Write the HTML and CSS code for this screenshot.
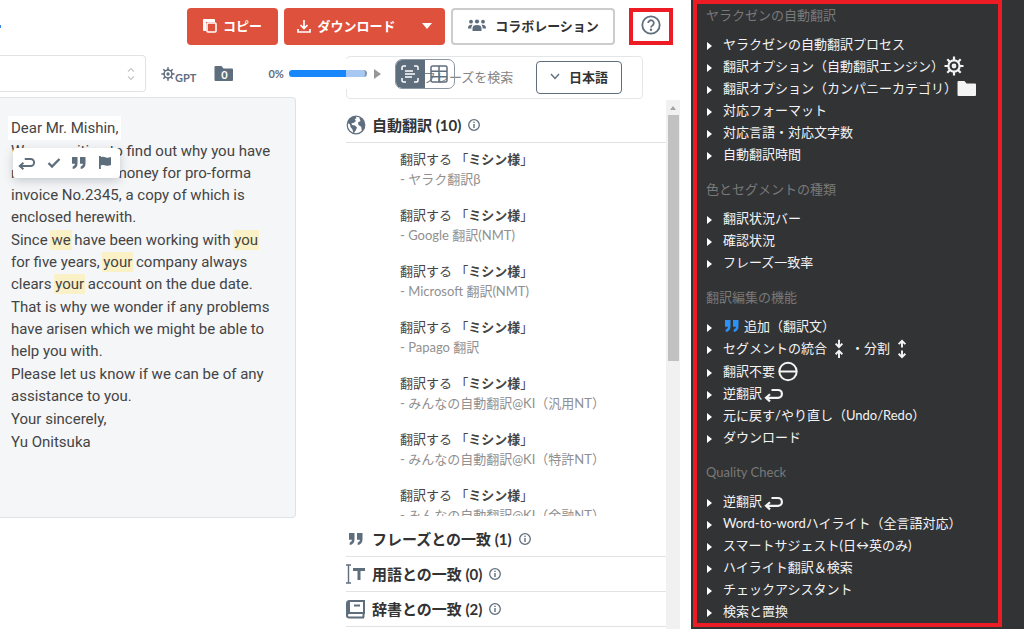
FILE: index.html
```html
<!DOCTYPE html>
<html lang="ja">
<head>
<meta charset="utf-8">
<title>翻訳エディタ</title>
<link rel="stylesheet" href="styles.css">
</head>
<body>
<svg class="sprite" aria-hidden="true">
  <symbol id="quote" viewBox="0 0 16 14"><path fill="currentColor" d="M1 1h5.500v6.500c0 3.300-1.800 5-4.800 5.500V10.500c1.500-.4 2.100-1.300 2.200-2.700H1zM9 1h5.500v6.500c0 3.300-1.800 5-4.800 5.500V10.500c1.500-.4 2.100-1.300 2.200-2.700H9z"/></symbol>
  <symbol id="return" viewBox="0 0 20 16"><path fill="none" stroke="currentColor" stroke-width="2.200" d="M7.500 3h6.500a3.900 3.900 0 0 1 0 7.800H3"/><path fill="none" stroke="currentColor" stroke-width="2.200" d="M6 7.200l-4 3.600L6 14.400"/></symbol>
  <symbol id="gear" viewBox="0 0 20 20"><g fill="none" stroke="currentColor" stroke-width="2.200"><circle cx="10" cy="10" r="5.600"/><circle cx="10" cy="10" r="1.300"/><path d="M10 .5v4M10 15.500v4M.5 10h4M15.500 10h4M3.300 3.300L6 6M14 14l2.700 2.700M16.700 3.300L14 6M6 14l-2.700 2.700"/></g></symbol>
  <symbol id="folder" viewBox="0 0 20 17"><path fill="currentColor" d="M1.500 1H7.500l2 2.500H18a1 1 0 0 1 1 1V15a1 1 0 0 1-1 1H1.500a1 1 0 0 1-1-1V2a1 1 0 0 1 1-1z"/></symbol>
  <symbol id="info" viewBox="0 0 12 12"><circle cx="6" cy="6" r="5.300" fill="none" stroke="currentColor" stroke-width="1.300"/><path fill="currentColor" d="M5.300 2.700h1.400v1.400H5.300zM5.300 5h1.400v4H5.300z"/></symbol>
</svg>
<main class="app">
  <header class="header">
    <span class="edge-mark"></span>
    <button class="btn btn-red btn-copy"><svg width="14" height="14" viewBox="0 0 14 14"><path fill="#fff" d="M1 0h10a1 1 0 0 1 1 1v2H3v9H1a1 1 0 0 1-1-1V1a1 1 0 0 1 1-1z"/><rect x="4" y="4" width="9" height="9" rx="1" fill="none" stroke="#fff" stroke-width="1.600"/></svg>コピー</button>
    <button class="btn btn-red btn-download"><svg width="14" height="14" viewBox="0 0 14 14"><path fill="none" stroke="#fff" stroke-width="1.700" d="M7 1v8M3.500 6L7 9.500 10.500 6M1 10v3h12v-3"/></svg>ダウンロード<svg class="drop" width="10" height="6" viewBox="0 0 10 6"><path fill="#fff" d="M0 0h10L5 6z"/></svg></button>
    <button class="btn btn-outline"><svg width="20" height="13" viewBox="0 0 20 13"><g fill="#5f6e7d"><circle cx="4" cy="2.700" r="1.900"/><circle cx="10" cy="2.500" r="2.100"/><circle cx="16" cy="2.700" r="1.900"/><path d="M5.500 12V9.500C5.500 7 7 6 10 6s4.500 1 4.500 3.500V12zM1 9.500C1 7 2 5.700 5.600 5.800 4.800 6.700 4.300 8 4.300 9.500zM19 9.500c0-2.500-1-3.800-4.600-3.700.8.9 1.300 2.200 1.300 3.700z"/></g></svg>コラボレーション</button>
    <button class="btn-help" aria-label="ヘルプ"><svg width="20" height="20" viewBox="0 0 20 20"><g fill="none" stroke="#5f6e7d" stroke-width="1.800"><circle cx="10" cy="10" r="8.700"/><path d="M7.200 8a2.800 2.800 0 1 1 4.600 2.200C10.700 11 10 11.400 10 12.600"/></g><circle cx="10" cy="14.800" r="1.200" fill="#5f6e7d"/></svg></button>
  </header>

  <div class="workspace">
    <section class="source">
      <div class="toolbar">
        <button class="picker" aria-label="選択"><svg width="8" height="14" viewBox="0 0 8 14"><path fill="none" stroke="#c3c8cd" stroke-width="1.200" d="M1 4.500L4 1.500l3 3M1 9.500l3 3 3-3"/></svg></button>
        <button class="gpt"><svg width="14" height="14"><use href="#gear"/></svg><span>GPT</span></button>
        <button class="folder-count"><svg width="20" height="17"><use href="#folder"/></svg><span>0</span></button>
        <div class="progress"><span>0%</span><span class="bar"><span class="bar-fill"></span></span><svg width="7" height="10" viewBox="0 0 7 10"><path fill="#979797" d="M0 0l7 5-7 5z"/></svg></div>
        <div class="view-toggle">
          <button class="on" aria-label="文書表示"><svg width="18" height="18" viewBox="0 0 18 18"><path fill="none" stroke="#fff" stroke-width="1.500" d="M1 5V2.500C1 1.600 1.600 1 2.500 1H5M13 1h2.500c.9 0 1.500.6 1.500 1.500V5M17 13v2.500c0 .9-.6 1.500-1.500 1.500H13M5 17H2.500C1.600 17 1 16.400 1 15.500V13M4 6h8M4 9h10M4 12h7"/></svg></button>
          <button aria-label="表形式"><svg width="18" height="18" viewBox="0 0 18 18"><path fill="none" stroke="#5f6e7d" stroke-width="1.500" d="M2.500 1h13c.9 0 1.500.6 1.500 1.500v13c0 .9-.6 1.500-1.500 1.500h-13C1.600 17 1 16.400 1 15.500v-13C1 1.600 1.600 1 2.500 1zM1 6.300h16M1 11.700h16M9 1v16"/></svg></button>
        </div>
      </div>
      <article class="document" lang="en">
        <p><span class="active">Dear Mr. Mishin,</span></p>
        <p>We are writing to find out why you have not sent us the money for pro&#8209;forma invoice No.2345, a copy of which is enclosed herewith.</p>
        <p>Since <mark>we</mark> have been working with <mark>you</mark> for five years, <mark>your</mark> company always clears <mark>your</mark> account on the due date.</p>
        <p>That is why we wonder if any problems have arisen which we might be able to help you with.</p>
        <p>Please let us know if we can be of any assistance to you.</p>
        <p>Your sincerely,</p>
        <p>Yu Onitsuka</p>
        <div class="popup">
          <button aria-label="逆翻訳"><svg width="18" height="15"><use href="#return"/></svg></button>
          <button aria-label="確認"><svg width="14" height="12" viewBox="0 0 14 12"><path fill="none" stroke="currentColor" stroke-width="2.400" d="M1.500 6L5 9.500 12.500 2"/></svg></button>
          <button aria-label="追加"><svg width="16" height="14"><use href="#quote"/></svg></button>
          <button aria-label="フラグ"><svg width="14" height="14" viewBox="0 0 14 14"><path fill="currentColor" d="M1 0h1.800v1.200C5 .3 6.500 1 8 1.600c1.500.5 3 .2 5-.6v8c-2 .9-3.600 1-5.200.5C6 9 4.700 8.700 2.800 9.500V13H1z"/></svg></button>
        </div>
      </article>
    </section>

    <section class="lookup">
      <div class="search">
        <input type="text" placeholder="フレーズを検索" aria-label="フレーズを検索">
        <button class="lang"><svg width="10" height="7" viewBox="0 0 10 7"><path fill="none" stroke="#5f6e7d" stroke-width="1.400" d="M1 1l4 4.500L9 1"/></svg>日本語</button>
      </div>
      <div class="results">
        <div class="panels">
          <h2 class="panel-title first"><svg width="20" height="20" viewBox="0 0 20 20"><circle cx="10" cy="10" r="8.800" fill="#fff" stroke="#5f6e7d" stroke-width="1.200"/><path fill="#5f6e7d" d="M2 6C3.500 3 6 1.500 9.500 1.200L10.500 3 8.700 4.500 10 6 7.500 8 5.500 8.200 6 10l3 .6 2 1.900-1.300 3L7.500 18.500 6.500 14.500 4.500 12 4 9.500 1.800 8zM13 2l4 2.700 2 5-.8 4-2.300 2.500-.7-4.400L12.500 10 12 7.500 14.500 6z"/></svg>自動翻訳 (10)<svg class="info" width="12" height="12"><use href="#info"/></svg></h2>
          <ul class="matches">
            <li>翻訳する 「<b>ミシン様</b>」<small>- ヤラク翻訳β</small></li>
            <li>翻訳する 「<b>ミシン様</b>」<small>- Google 翻訳(NMT)</small></li>
            <li>翻訳する 「<b>ミシン様</b>」<small>- Microsoft 翻訳(NMT)</small></li>
            <li>翻訳する 「<b>ミシン様</b>」<small>- Papago 翻訳</small></li>
            <li>翻訳する 「<b>ミシン様</b>」<small>- みんなの自動翻訳@KI（汎用NT）</small></li>
            <li>翻訳する 「<b>ミシン様</b>」<small>- みんなの自動翻訳@KI（特許NT）</small></li>
            <li>翻訳する 「<b>ミシン様</b>」<small>- みんなの自動翻訳@KI（金融NT）</small></li>
          </ul>
          <h2 class="panel-title"><svg width="20" height="14"><use href="#quote"/></svg>フレーズとの一致 (1)<svg class="info" width="12" height="12"><use href="#info"/></svg></h2>
          <h2 class="panel-title"><svg width="20" height="20" viewBox="0 0 20 20"><path fill="none" stroke="currentColor" stroke-width="1.400" d="M0 1h5M2.500 1v18M0 19h5"/><path fill="none" stroke="currentColor" stroke-width="3" d="M7 5.500h12M13 5.500V16"/></svg>用語との一致 (0)<svg class="info" width="12" height="12"><use href="#info"/></svg></h2>
          <h2 class="panel-title"><svg width="20" height="20" viewBox="0 0 20 20"><path fill="none" stroke="currentColor" stroke-width="2" d="M18 14V2H3.500C2 2 1 3 1 4.500v12C1 17.700 2 18.500 3 18.500h15M1.500 15c.6-.8 1.200-1 2-1H19M8 6.500h6M17.500 14v4.500"/><path fill="currentColor" d="M1 3h3v11H1z"/></svg>辞書との一致 (2)<svg class="info" width="12" height="12"><use href="#info"/></svg></h2>
        </div>
        <div class="scrollbar"><svg width="6" height="4" viewBox="0 0 6 4"><path fill="#a3a3a3" d="M0 4l3-4 3 4z"/></svg><span class="thumb"></span></div>
      </div>
    </section>
  </div>
</main>

<aside class="help">
  <nav>
    <h3>ヤラクゼンの自動翻訳</h3>
    <ul>
      <li><a href="#">ヤラクゼンの自動翻訳プロセス</a></li>
      <li><a href="#">翻訳オプション（自動翻訳エンジン）<svg width="20" height="20"><use href="#gear"/></svg></a></li>
      <li><a href="#">翻訳オプション（カンパニーカテゴリ）<svg width="20" height="17"><use href="#folder"/></svg></a></li>
      <li><a href="#">対応フォーマット</a></li>
      <li><a href="#">対応言語・対応文字数</a></li>
      <li><a href="#">自動翻訳時間</a></li>
    </ul>
    <h3>色とセグメントの種類</h3>
    <ul>
      <li><a href="#">翻訳状況バー</a></li>
      <li><a href="#">確認状況</a></li>
      <li><a href="#">フレーズ一致率</a></li>
    </ul>
    <h3>翻訳編集の機能</h3>
    <ul>
      <li><a href="#"><svg class="blue" width="18" height="14"><use href="#quote"/></svg>追加（翻訳文）</a></li>
      <li><a href="#">セグメントの統合<svg class="split" width="10" height="22" viewBox="0 0 10 23"><path fill="none" stroke="currentColor" stroke-width="2" d="M5 3v7M1.500 7L5 10.500 8.500 7M5 22v-7M1.500 18L5 14.500 8.500 18"/></svg>・分割<svg class="split" width="10" height="22" viewBox="0 0 10 23"><path fill="none" stroke="currentColor" stroke-width="2" d="M5 4v7M1.500 7.500L5 4l3.500 3.500M5 21v-7M1.500 17.500L5 21l3.500-3.500"/></svg></a></li>
      <li><a href="#">翻訳不要<svg class="after" width="22" height="23" viewBox="0 0 22 23"><path fill="none" stroke="currentColor" stroke-width="2" d="M2 12.500h18"/><circle cx="11" cy="12.500" r="8.700" fill="none" stroke="currentColor" stroke-width="2"/></svg></a></li>
      <li><a href="#">逆翻訳<svg class="after back" width="20" height="16"><use href="#return"/></svg></a></li>
      <li><a href="#">元に戻す/やり直し（Undo/Redo）</a></li>
      <li><a href="#">ダウンロード</a></li>
    </ul>
    <h3>Quality Check</h3>
    <ul>
      <li><a href="#">逆翻訳<svg class="after back" width="20" height="16"><use href="#return"/></svg></a></li>
      <li><a href="#">Word-to-wordハイライト（全言語対応）</a></li>
      <li><a href="#">スマートサジェスト(日↔英のみ)</a></li>
      <li><a href="#">ハイライト翻訳＆検索</a></li>
      <li><a href="#">チェックアシスタント</a></li>
      <li><a href="#">検索と置換</a></li>
    </ul>
  </nav>
</aside>
</body>
</html>
```

FILE: styles.css
```css
* { box-sizing: border-box; }

body {
  margin: 0;
  height: 100vh;
  display: flex;
  overflow: hidden;
  background: #fff;
  color: #333;
  font: 13px/20px Lato, "Noto Sans CJK JP", sans-serif;
}

.sprite { position: absolute; width: 0; height: 0; }
svg { flex: none; }
button { font: inherit; color: inherit; padding: 0; border: 0; background: none; display: flex; align-items: center; justify-content: center; }
ul { list-style: none; margin: 0; padding: 0; }
h2, h3, p { margin: 0; }

.app { flex: 1; min-width: 0; display: flex; flex-direction: column; }

.header { display: flex; justify-content: flex-end; align-items: center; gap: 6px; padding: 8px 18px 0 0; }
.edge-mark { width: 1px; height: 3px; margin-right: auto; background: #3b86d8; }
.btn { height: 37px; border-radius: 4px; gap: 6px; font-weight: 700; padding-bottom: 2px; }
.btn-red { background: #dd513d; color: #fff; }
.btn-copy { width: 91px; }
.btn-download { width: 161px; }
.drop { margin-left: 20px; }
.btn-outline { width: 164px; gap: 8px; border: 2px solid #ccc; color: #333; }
.btn-help { width: 44px; height: 37px; margin-left: 8px; border: 4px solid #ed1c24; padding-bottom: 4px; }

.workspace { flex: 1; min-height: 0; display: flex; }
.source { flex: none; width: 346px; padding-top: 10px; }

.toolbar { position: relative; z-index: 1; display: flex; align-items: center; height: 37px; color: #5f6e7d; }
.picker { flex: none; width: 146px; height: 37px; justify-content: flex-end; padding-right: 10px; border: 1px solid #dfe3e6; border-left: 0; border-radius: 0 4px 4px 0; }
.gpt { margin-left: 15px; font-size: 11px; font-weight: 700; }
.gpt span { padding-top: 8px; }
.folder-count { flex: none; margin-left: 18px; display: grid; }
.folder-count > * { grid-area: 1 / 1; place-self: center; }
.folder-count span { color: #fff; font-size: 11px; font-weight: 700; padding-top: 2px; line-height: 16px; }
.progress { flex: none; display: flex; align-items: center; gap: 5px; margin-left: 34px; padding-right: 10px; height: 30px; background: #fff; font-size: 11px; font-weight: 700; }
.bar { width: 78px; height: 7px; border-radius: 4px; overflow: hidden; background: #a6c8f3; border-right: 2px solid #8492a3; }
.bar-fill { display: block; width: 75%; height: 7px; background: #1787fb; }
.progress svg { margin-left: 2px; }
.view-toggle { flex: none; display: flex; margin-left: 4px; border: 1px solid #8b97a3; border-radius: 7px; overflow: hidden; }
.view-toggle button { width: 29px; height: 28px; }
.view-toggle .on { background: #5f6e7d; }

.document {
  position: relative;
  width: 296px;
  margin-top: 5px;
  padding: 19px 24px 64px 11px;
  display: grid;
  gap: 1px;
  border: 1px solid #dfe3e8;
  border-left: 0;
  border-radius: 0 4px 4px 0;
  background: #f5f6f8;
  color: #444;
  font: 15px/22px Roboto, sans-serif;
}
.active { background: #fff; box-shadow: 0 0 0 3px #fff; }
mark { background: #faf1c6; color: inherit; box-shadow: 0 0 0 1px #faf1c6; }
.popup { position: absolute; left: 13px; top: 50px; display: flex; align-items: center; justify-content: space-around; width: 107px; height: 30px; padding-right: 3px; border-radius: 4px; background: #fff; color: #5f6e7d; box-shadow: 0 3px 10px rgba(60, 70, 80, .25); }

.lookup { flex: 1; min-width: 0; padding-top: 11px; display: flex; flex-direction: column; }
.search { display: flex; align-items: center; height: 43px; margin-right: 48px; padding-right: 20px; border: 1px solid #e3e6e8; border-radius: 4px; }
.search input { flex: 1; min-width: 0; padding: 0 0 2px 76px; border: 0; outline: 0; background: none; font: inherit; }
.search input::placeholder { color: #858585; opacity: 1; }
.lang { width: 86px; height: 33px; gap: 9px; padding-bottom: 2px; border: 1px solid #5f6e7d; border-radius: 4px; font-weight: 700; }

.results { flex: 1; min-height: 0; margin: 1px 11px 0 0; display: flex; }
.panels { flex: 1; min-width: 0; display: flex; flex-direction: column; padding-bottom: 2px; }
.panel-title { flex: none; display: flex; align-items: center; gap: 6px; height: 35px; border-bottom: 1px solid #e2e2e2; font-size: 15px; line-height: 22px; font-weight: 700; color: #333; }
.panel-title svg { color: #5f6e7d; }
.panel-title.first { height: 43px; padding-top: 7px; }
.panel-title .info { margin-left: 1px; }
.matches { flex: 1; min-height: 0; overflow: hidden; margin-bottom: 6px; padding: 6px 0 0 54px; color: #444; }
.matches li { height: 56px; }
.matches small { display: block; font-size: 13px; color: #909090; }
.scrollbar { width: 14px; display: flex; flex-direction: column; align-items: center; background: #f1f1f1; padding-top: 6px; }
.thumb { width: 11px; height: 246px; margin-top: 5px; background: #c1c1c1; }

.help { flex: none; width: 333px; padding: 0 22px 2px 2px; background: #323335; }
.help nav { height: 100%; padding: 0 9px; border: 4px solid #ed1c24; }
.help h3 { margin-bottom: 7px; font-size: 13px; line-height: 22px; font-weight: 400; color: #797979; }
.help ul { margin-bottom: 13px; }
.help li { display: flex; align-items: center; min-height: 22px; }
.help li::before { content: ""; width: 0; margin: 4px 11px 0 1px; border: 4px solid transparent; border-left: 5px solid #fff; border-right: 0; }
.help a { display: flex; align-items: center; line-height: 22px; color: #f4f4f4; text-decoration: none; white-space: nowrap; }
.help a .blue { margin-right: 3px; color: #2e91f5; }
.help a .split { margin: 0 7px; }
.help a .after { margin-left: 2px; }
.help a .back { margin-top: 4px; }
```
